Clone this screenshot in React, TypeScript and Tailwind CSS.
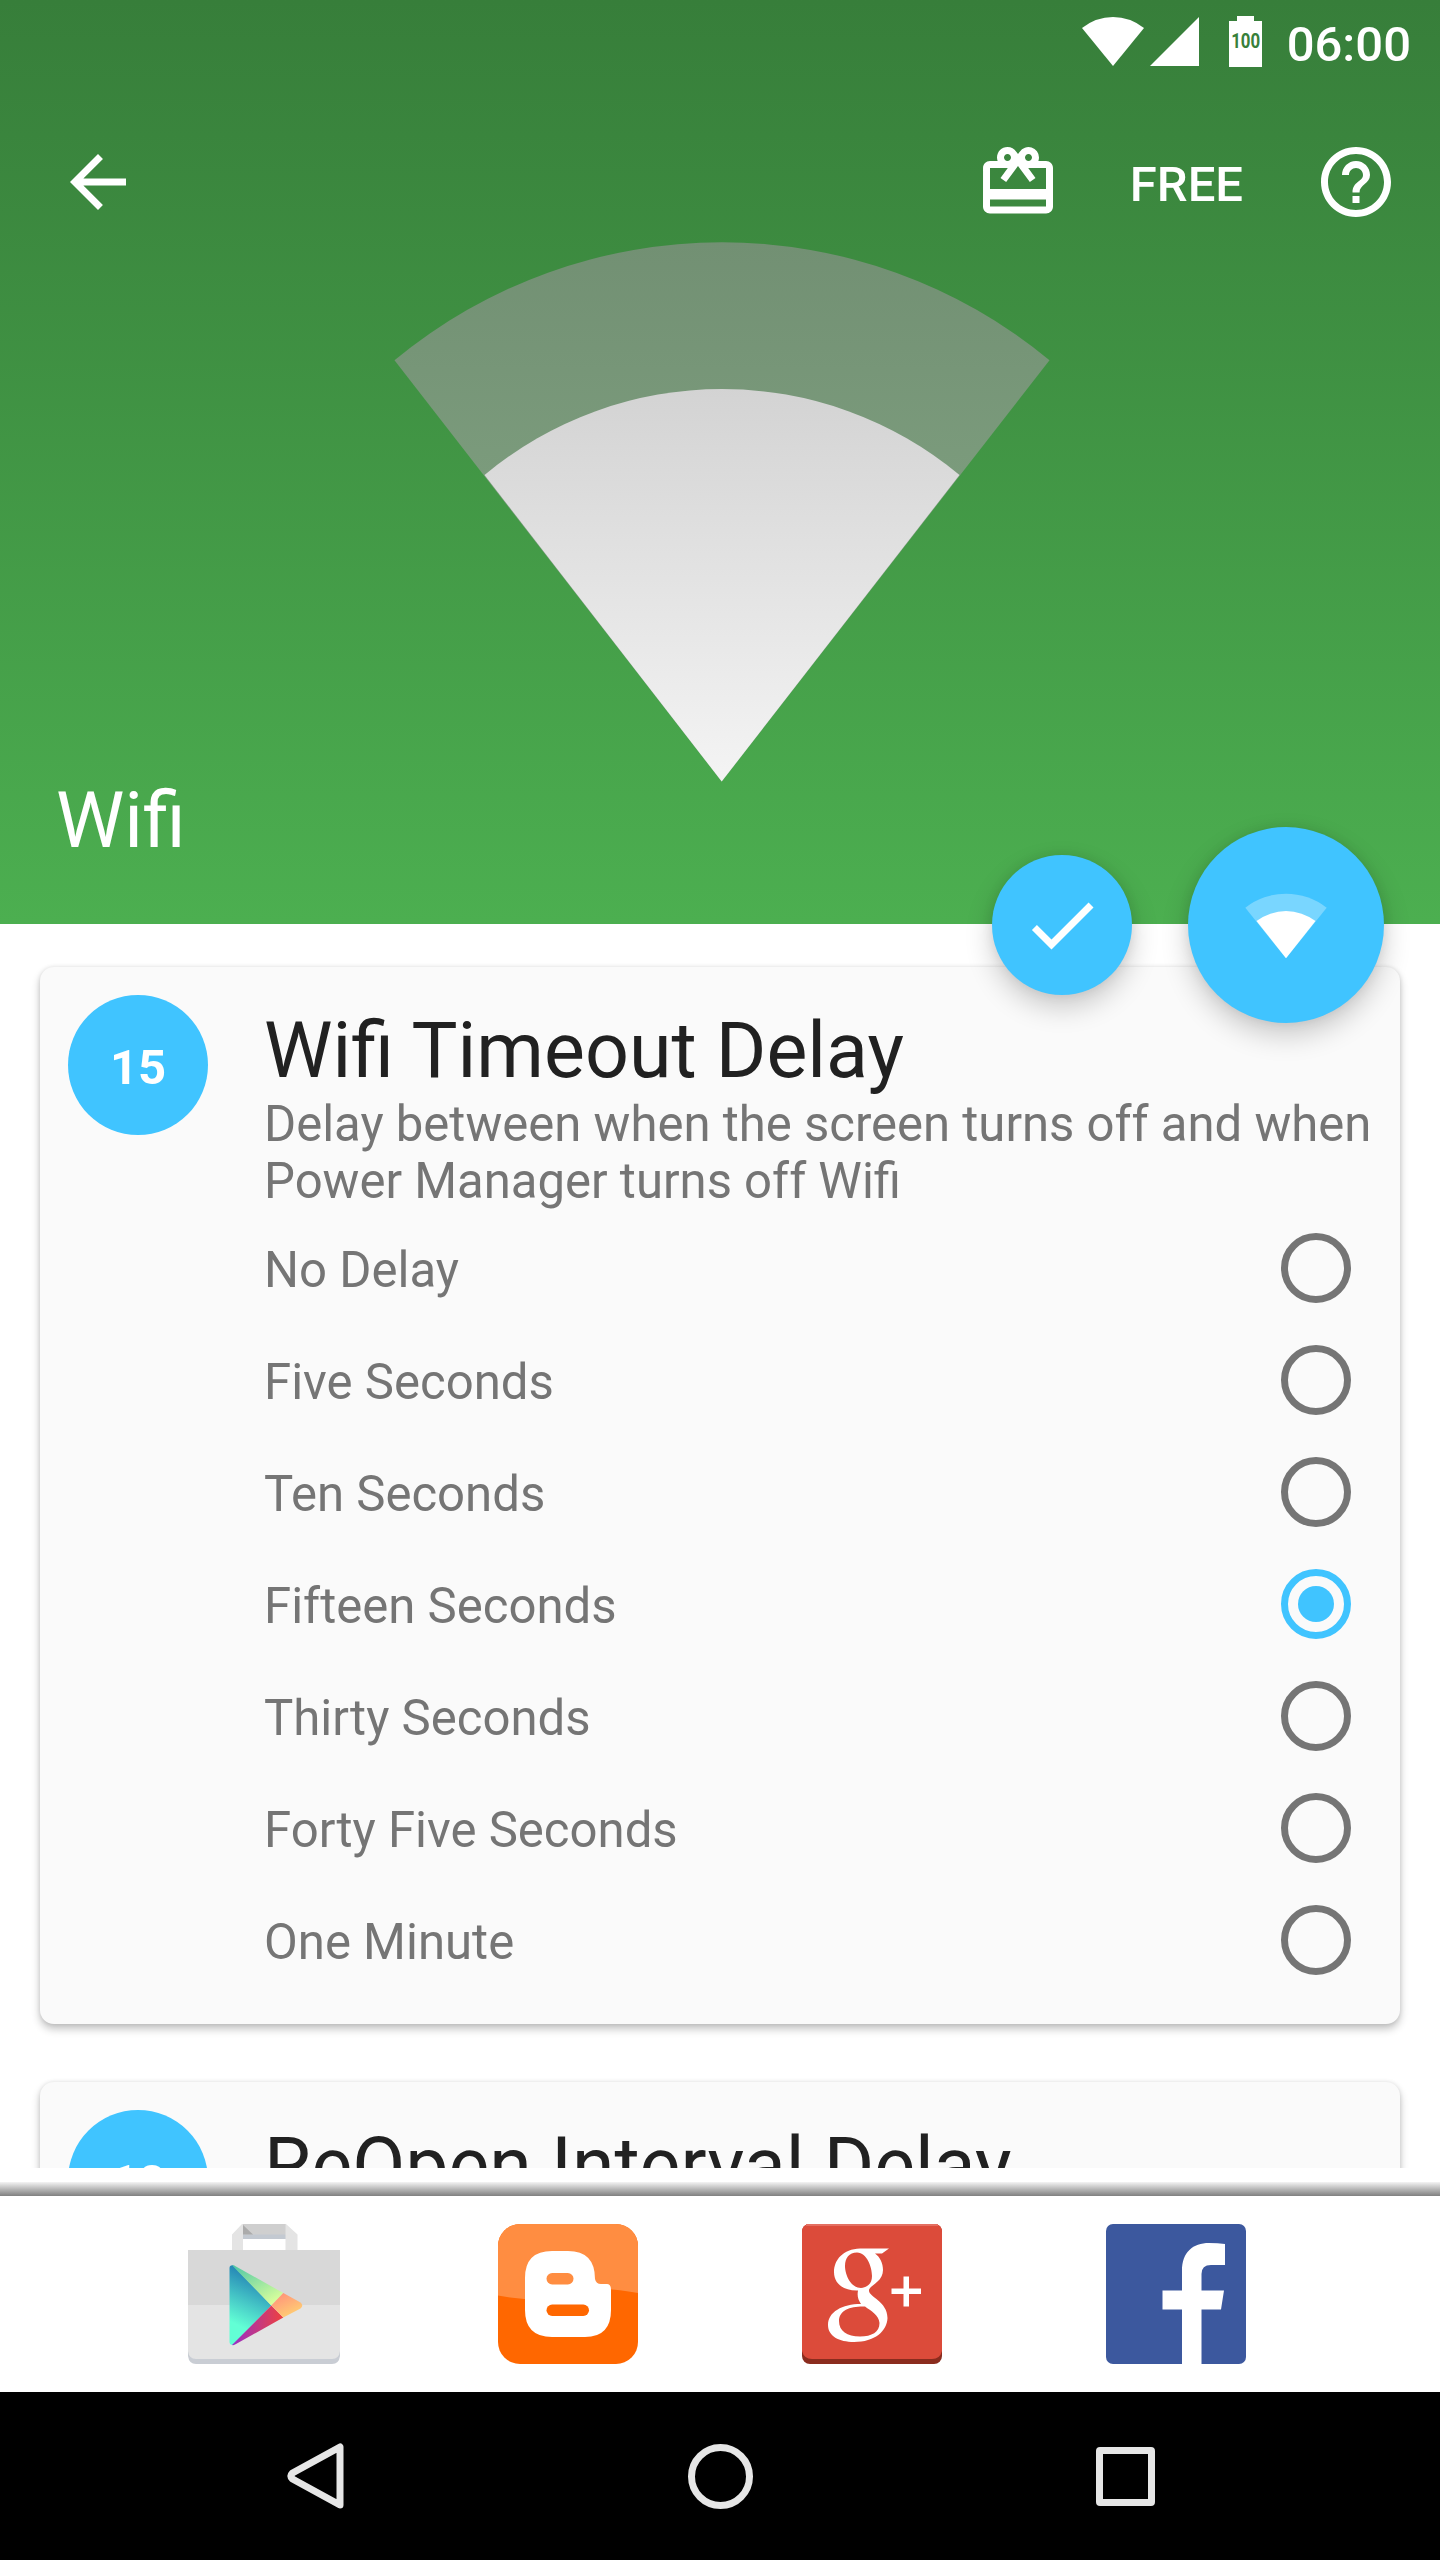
import { MdArrowBack, MdCardGiftcard, MdCheck, MdHelpOutline } from "react-icons/md";

const delays = [
  "No Delay",
  "Five Seconds",
  "Ten Seconds",
  "Fifteen Seconds",
  "Thirty Seconds",
  "Forty Five Seconds",
  "One Minute",
];

function StatusBar() {
  return (
    <div className="flex h-[84px] items-start justify-end pr-[29px]">
      <svg className="mt-4 h-[52px] w-[182px]" viewBox="1081 16 182 52" fill="#fff">
        <path d="M1113 66 1082 28Q1096 17 1113 17T1144 28Z" />
        <path d="M1150 66H1199V17Z" />
        <path d="M1237 16h17v5h8v46h-33V21h8Z" />
        <text
          x="1231.2"
          y="48.3"
          fontSize="19.3"
          fontWeight="700"
          fill="#38803a"
          fontFamily="Roboto, sans-serif"
          textLength="29"
          lengthAdjust="spacingAndGlyphs"
        >
          100
        </text>
      </svg>
      <span className="mt-4 ml-[24px] text-[49px] leading-[57px] font-medium">06:00</span>
    </div>
  );
}

function Header() {
  return (
    <header className="relative flex h-[924px] flex-col bg-linear-to-b from-[#377e3a] to-[#4caf50] text-white">
      <svg className="absolute top-0 left-0 h-[924px] w-full" viewBox="0 0 1440 924">
        <defs>
          <linearGradient id="outerFan" x1="0" y1="242" x2="0" y2="475" gradientUnits="userSpaceOnUse">
            <stop stopColor="#729073" />
            <stop offset="1" stopColor="#7b9b7c" />
          </linearGradient>
          <linearGradient id="innerFan" x1="0" y1="387" x2="0" y2="782" gradientUnits="userSpaceOnUse">
            <stop stopColor="#d3d3d3" />
            <stop offset="1" stopColor="#f4f4f4" />
          </linearGradient>
        </defs>
        <path d="M394.500 360.300A513.500 513.500 0 0 1 1049.500 360.300L721.700 781.500Z" fill="url(#outerFan)" />
        <path d="M484.500 475A371 371 0 0 1 959.500 475L721.700 781.500Z" fill="url(#innerFan)" />
      </svg>
      <StatusBar />
      <div className="relative flex h-[196px] items-center pr-[42px] pl-[56px]">
        <MdArrowBack className="size-[84px]" />
        <div className="ml-auto flex items-center">
          <MdCardGiftcard className="size-[84px]" />
          <span className="mr-[71px] ml-[70px] pt-[4px] text-[49px] leading-[57px] font-medium">FREE</span>
          <MdHelpOutline className="size-[84px]" />
        </div>
      </div>
      <h1 className="relative mt-auto mb-[58px] ml-[56px] text-[77px] leading-[90px]">Wifi</h1>
      <div className="absolute top-[827px] right-[56px] z-10 flex items-center gap-[56px]">
        <button className="flex size-[140px] items-center justify-center rounded-full bg-[#40c4ff] shadow-[0_12px_28px_rgba(0,0,0,0.2),0_0_12px_rgba(0,0,0,0.08)]">
          <MdCheck className="size-[84px]" />
        </button>
        <button className="flex size-[196px] items-center justify-center rounded-full bg-[#40c4ff] shadow-[0_12px_28px_rgba(0,0,0,0.2),0_0_12px_rgba(0,0,0,0.08)]">
          <svg className="h-[68px] w-[84px]" viewBox="1244 891 84 68" fill="#fff">
            <path opacity=".3" d="M1286 958.300 1245.300 907.700A66 66 0 0 1 1326.700 907.700Z" />
            <path d="M1286 958.300 1256.500 921A49 49 0 0 1 1315.500 921Z" />
          </svg>
        </button>
      </div>
    </header>
  );
}

function Badge({ value }: { value: string }) {
  return (
    <div className="mt-[28px] ml-[28px] flex size-[140px] shrink-0 items-center justify-center rounded-full bg-[#40c4ff] pt-[4px] text-[49px] leading-[57px] font-bold text-white">
      {value}
    </div>
  );
}

const cardClass =
  "flex w-[1360px] shrink-0 rounded-[14px] bg-[#fafafa] shadow-[0_5px_9px_rgba(0,0,0,0.24),0_0_4px_rgba(0,0,0,0.1)]";

function Radio({ checked }: { checked: boolean }) {
  return checked ? (
    <span className="flex size-[70px] items-center justify-center rounded-full border-[7px] border-[#40c4ff]">
      <span className="size-9 rounded-full bg-[#40c4ff]" />
    </span>
  ) : (
    <span className="size-[70px] rounded-full border-[7px] border-[#757575]" />
  );
}

function Settings() {
  return (
    <main className="flex h-[1244px] flex-col items-center gap-[58px] overflow-hidden bg-white pt-[43px]">
      <section className={cardClass + " h-[1057px]"}>
        <Badge value="15" />
        <div className="ml-[56px] flex-1 pt-[39px]">
          <h2 className="text-[77.15px] leading-[90px] text-[#212121]">Wifi Timeout Delay</h2>
          <p className="w-[1120px] text-[49.05px] leading-[57px] text-[#757575]">
            Delay between when the screen turns off and when Power Manager turns off Wifi
          </p>
          <ul className="mt-[2px] pr-[49px]">
            {delays.map((label) => (
              <li key={label} className="flex h-[112px] items-center justify-between text-[49.1px] leading-[57px] text-[#757575]">
                <span className="pt-[5px]">{label}</span>
                <Radio checked={label === "Fifteen Seconds"} />
              </li>
            ))}
          </ul>
        </div>
      </section>
      <section className={cardClass + " h-[400px]"}>
        <Badge value="10" />
        <h2 className="ml-[56px] pt-[39px] text-[77px] leading-[90px] text-[#212121]">ReOpen Interval Delay</h2>
      </section>
    </main>
  );
}

function PlayStoreLogo() {
  return (
    <svg className="h-[140px] w-[154px]" viewBox="-1 0 154 140">
      <defs>
        <linearGradient id="psBlue" x1=".6" y1="0" x2=".35" y2="1">
          <stop stopColor="#1a6fb0" />
          <stop offset=".8" stopColor="#62ffd5" />
        </linearGradient>
        <linearGradient id="psGreen" x1="0" y1="0" x2=".7" y2="1">
          <stop stopColor="#4dc6a6" />
          <stop offset="1" stopColor="#d9ff9c" />
        </linearGradient>
        <linearGradient id="psOrange" x1="0" y1="0" x2=".6" y2="1">
          <stop stopColor="#ff8b7c" />
          <stop offset="1" stopColor="#ffcf73" />
        </linearGradient>
        <linearGradient id="psRed" x1="0" y1="0" x2="1" y2="0">
          <stop stopColor="#982fc9" />
          <stop offset="1" stopColor="#ef413d" />
        </linearGradient>
      </defs>
      <path d="M54 10H98V15H54Z" fill="#c3c9d1" />
      <path d="M54 0H98V10.500H54Z" fill="#cfcfcf" />
      <path d="M54 0 65 10.500H54Z" fill="#ababab" />
      <path d="M54 0 44 10.500V27H55V0ZM98 0 109.500 10.500V27H97.500V0Z" fill="#e4e4e4" />
      <path d="M0 120H152V132Q151 140 144 140H8Q1 140 0 132Z" fill="#c9cdd4" />
      <path d="M0 26H152V127Q151 135 144 135H8Q1 135 0 127Z" fill="#e4e4e4" />
      <path d="M0 26H152V81H0Z" fill="#d8d8d8" />
      <path d="M83.300 81.500 41.500 44Q41.500 41 45 41.300L83.300 81.500 45 121Q41.500 121 41.500 118V44Z" fill="url(#psBlue)" />
      <path d="M44 41.300Q46 41 48 42.500L95.300 69 83.300 81.500Z" fill="url(#psGreen)" />
      <path d="M44 121Q46 121.500 48 120L95.300 93.500 83.300 81.500Z" fill="url(#psRed)" />
      <path d="M95.300 69 112.500 78.500Q116 81.500 112.500 84.500L95.300 93.500 83.300 81.500Z" fill="url(#psOrange)" />
    </svg>
  );
}

function BloggerLogo() {
  return (
    <svg className="size-[140px]" viewBox="0 0 140 140">
      <defs>
        <clipPath id="bloggerTile">
          <rect width="140" height="140" rx="22" />
        </clipPath>
      </defs>
      <g clipPath="url(#bloggerTile)">
        <path d="M0 0H140V140H0Z" fill="#ff6700" />
        <path d="M0 0H140V69Q120 65.500 108 65L50 76Q24 76 0 71.500Z" fill="#ff8d41" />
      </g>
      <path
        d="M54 27H70Q97 27 97 55Q98 60 103 60H109Q113 60 113 66V86Q113 113 87 113H54Q27 113 27 86V54Q27 27 54 27Z"
        fill="#fff"
      />
      <rect x="48.500" y="49" width="27" height="11.500" rx="5.700" fill="#ff8d41" />
      <rect x="48.500" y="80.500" width="42.500" height="11.500" rx="5.700" fill="#ff6700" />
    </svg>
  );
}

function GooglePlusLogo() {
  return (
    <svg className="size-[140px]" viewBox="0 0 140 140">
      <rect width="140" height="140" rx="8" fill="#8a2c1e" />
      <path d="M8 0H132Q140 0 140 8V127Q138 135 130 135H10Q2 135 0 127V8Q0 0 8 0Z" fill="#dc4b3a" />
      <path d="M4 1H136" stroke="#e46f61" strokeWidth="2" />
      <path
        fill="#fff"
        fillRule="evenodd"
        d="M87 24.500H58C41 25 32 36 32 48C32 60 42 67 56 66.500C55 72 56 76 59 80C40 80 26 88 26 101C26 112 37 118 52 118C73 118 85 107 85.500 94C85.500 77 66 73 67 66C68 61 81 58 81 46C81 39 78 33 73 29.500H80ZM55 28.500C65 29 70 43 70 52C70 60 65 63.500 59 64C49 64 43 51 43 42C43 34 47 28.500 55 28.500ZM63 82.500C69 87 77 91 77.500 99C77.500 108 70 112.500 58 112.500C45 112.500 37 107 37 97C37 86 49 82 63 82.500Z"
      />
      <path d="M101.500 52.500H107V64.500H119V70H107V82.500H101.500V70H89.500V64.500H101.500Z" fill="#fff" />
    </svg>
  );
}

function FacebookLogo() {
  return (
    <svg className="size-[140px]" viewBox="0 0 140 140">
      <rect width="140" height="140" rx="7" fill="#3c589e" />
      <path d="M76 140V85.500H56.500V66.500H76V47C76 28 87 19 103 19Q112 19 119 20V41H105Q95.500 41 95.500 50V66.500H118L115 85.500H95.500V140Z" fill="#fff" />
    </svg>
  );
}

function LinkBar() {
  return (
    <footer className="flex h-[224px] flex-col bg-white">
      <div className="mt-[14px] h-[14px] shrink-0 bg-linear-to-b from-[#f4f4f4] to-[#808080]" />
      <div className="flex flex-1 items-center pl-[187px]">
        <PlayStoreLogo />
        <div className="ml-[157px] flex gap-[164px]">
          <BloggerLogo />
          <GooglePlusLogo />
          <FacebookLogo />
        </div>
      </div>
    </footer>
  );
}

function NavigationBar() {
  return (
    <nav className="flex h-[168px] items-center bg-black pl-[284px]">
      <svg className="size-[66px]" viewBox="284 2443.500 66 66" fill="none" stroke="#e6e6e6" strokeWidth="7" strokeLinejoin="round">
        <path d="M340 2447.500V2505.500L292.500 2479.500Q289.500 2476.500 292.500 2473.500Z" />
      </svg>
      <span className="ml-[338px] size-[65px] rounded-full border-[7px] border-[#e6e6e6]" />
      <span className="ml-[343px] size-[59px] rounded-[4px] border-[7px] border-[#e6e6e6]" />
    </nav>
  );
}

export default function App() {
  return (
    <div className="h-[2560px] w-[1440px] overflow-hidden bg-white font-['Roboto',sans-serif]">
      <Header />
      <Settings />
      <LinkBar />
      <NavigationBar />
    </div>
  );
}
